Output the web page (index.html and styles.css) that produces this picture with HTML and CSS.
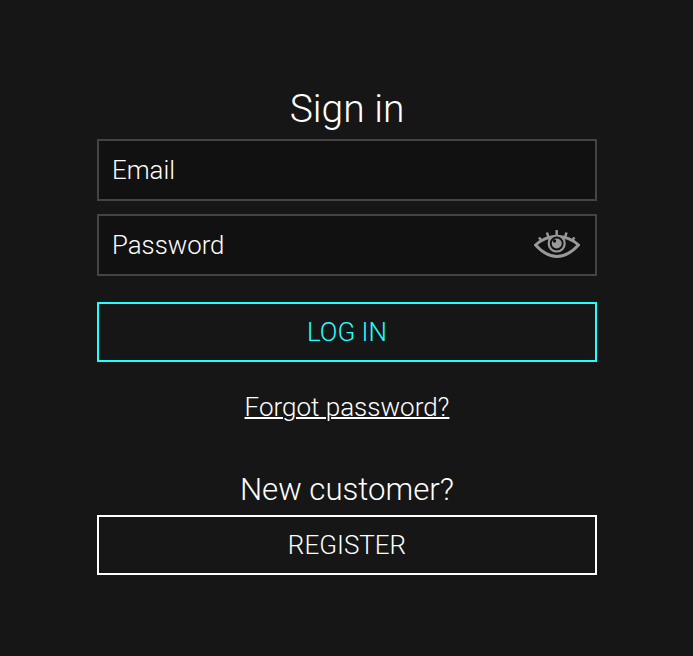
FILE: index.html
```html
<!DOCTYPE html>
<html lang="en">
<head>
  <meta charset="UTF-8">
  <meta name="viewport" content="width=device-width, initial-scale=1.0">
  <title>Sign in</title>
  <link rel="stylesheet" href="styles.css">
</head>
<body>

  <main class="signin">
    <h1 class="title">Sign in</h1>

    <div class="field">
      <span class="field-label">Email</span>
    </div>

    <div class="field field-password">
      <span class="field-label">Password</span>
      <svg class="eye" viewBox="0 0 46 30" width="46" height="30" aria-hidden="true">
        <path d="M1.500 16C8 10 15 7.500 23 7.500S38 10 44.500 16C38 23 31 27.500 23 27.500S8 23 1.500 16Z" fill="none" stroke="#999" stroke-width="3"/>
        <circle cx="22.700" cy="14.500" r="8" fill="#111" stroke="#999" stroke-width="2.200"/>
        <circle cx="22.700" cy="14.500" r="5" fill="#999"/>
        <circle cx="20.500" cy="12" r="1.700" fill="#111"/>
        <path d="M22.700 7V1M14.500 8.500L13 3.500M31 8.500L32.500 3.500M8 12L5 8.500M37.500 12l3-3.500" fill="none" stroke="#999" stroke-width="2.500"/>
      </svg>
    </div>

    <button class="btn btn-login">LOG IN</button>

    <a class="forgot" href="#">Forgot password?</a>

    <h2 class="subtitle">New customer?</h2>

    <button class="btn btn-register">REGISTER</button>
  </main>

</body>
</html>
```

FILE: styles.css
```css
body {
  margin: 0;
  background-color: #161616;
  font-family: Roboto, "Liberation Sans", sans-serif;
  font-weight: 300;
  color: #fff;
}

.signin {
  width: 500px;
  margin-left: 97px;
  padding-top: 87px;
  display: flex;
  flex-direction: column;
  align-items: center;
}

.title {
  margin: 0 0 7px;
  font-size: 39px;
  line-height: 45px;
  font-weight: 300;
}

.field {
  width: 100%;
  height: 62px;
  box-sizing: border-box;
  display: flex;
  align-items: center;
  justify-content: space-between;
  padding: 0 15px 0 13px;
  margin-bottom: 13px;
  background-color: #111;
  border: 2px solid #444;
  font-size: 25.800px;
}

.field-password {
  margin-bottom: 26px;
}

.eye {
  display: block;
  margin-top: -2px;
}

.btn {
  width: 100%;
  height: 60px;
  box-sizing: border-box;
  background: none;
  font-family: inherit;
  font-size: 26px;
  font-weight: 300;
  cursor: pointer;
}

.btn-login {
  border: 2px solid #2ff;
  color: #2ff;
}

.btn-register {
  border: 2px solid #fff;
  color: #fff;
}

.forgot {
  margin-top: 30px;
  font-size: 26px;
  line-height: 31px;
  color: #fff;
  text-decoration-thickness: 2px;
}

.subtitle {
  margin: 49px 0 7px;
  font-size: 31.200px;
  line-height: 36px;
  font-weight: 300;
}
```
